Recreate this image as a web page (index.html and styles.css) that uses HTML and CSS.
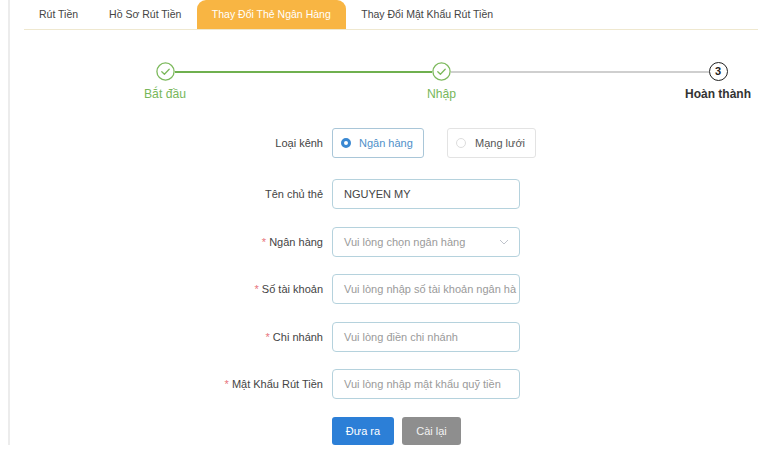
FILE: index.html
```html
<!DOCTYPE html>
<html lang="vi">
<head>
<meta charset="utf-8">
<title>Thay Đổi Thẻ Ngân Hàng</title>
<link rel="stylesheet" href="styles.css">
</head>
<body>
<div class="wrap">
  <nav class="tabs">
    <div class="tab">Rút Tiền</div>
    <div class="tab">Hồ Sơ Rút Tiền</div>
    <div class="tab active">Thay Đổi Thẻ Ngân Hàng</div>
    <div class="tab">Thay Đổi Mật Khẩu Rút Tiền</div>
  </nav>

  <div class="steps">
    <div class="step done">
      <span class="circle"><svg width="19" height="19" viewBox="0 0 19 19"><circle cx="9.5" cy="9.5" r="8.6" fill="none" stroke="#7cb95c" stroke-width="1.3"/><path d="M5.8 9.8 L8.4 12.2 L13.2 7.2" fill="none" stroke="#7cb95c" stroke-width="1.3" stroke-linecap="round" stroke-linejoin="round"/></svg></span>
      <span class="label">Bắt đầu</span>
    </div>
    <div class="line green"></div>
    <div class="step done">
      <span class="circle"><svg width="19" height="19" viewBox="0 0 19 19"><circle cx="9.5" cy="9.5" r="8.6" fill="none" stroke="#7cb95c" stroke-width="1.3"/><path d="M5.8 9.8 L8.4 12.2 L13.2 7.2" fill="none" stroke="#7cb95c" stroke-width="1.3" stroke-linecap="round" stroke-linejoin="round"/></svg></span>
      <span class="label">Nhập</span>
    </div>
    <div class="line gray"></div>
    <div class="step current">
      <span class="circle num">3</span>
      <span class="label">Hoàn thành</span>
    </div>
  </div>

  <form class="form">
    <div class="row first">
      <label class="lbl">Loại kênh</label>
      <div class="radios">
        <span class="radio checked"><span class="dot"></span>Ngân hàng</span>
        <span class="radio"><span class="dot"></span>Mạng lưới</span>
      </div>
    </div>
    <div class="row">
      <label class="lbl">Tên chủ thẻ</label>
      <div class="input value">NGUYEN MY</div>
    </div>
    <div class="row">
      <label class="lbl"><span class="req">*</span> Ngân hàng</label>
      <div class="input select"><span>Vui lòng chọn ngân hàng</span>
        <svg class="chev" width="10" height="6" viewBox="0 0 10 6"><path d="M1 1 L5 5 L9 1" fill="none" stroke="#c0c4cc" stroke-width="1"/></svg>
      </div>
    </div>
    <div class="row">
      <label class="lbl"><span class="req">*</span> Số tài khoản</label>
      <div class="input">Vui lòng nhập số tài khoản ngân hà</div>
    </div>
    <div class="row">
      <label class="lbl"><span class="req">*</span> Chi nhánh</label>
      <div class="input">Vui lòng điền chi nhánh</div>
    </div>
    <div class="row">
      <label class="lbl"><span class="req">*</span> Mật Khẩu Rút Tiền</label>
      <div class="input">Vui lòng nhập mật khẩu quỹ tiền</div>
    </div>
    <div class="row buttons">
      <span class="lbl"></span>
      <button type="button" class="btn primary">Đưa ra</button>
      <button type="button" class="btn reset">Cài lại</button>
    </div>
  </form>
</div>
</body>
</html>
```

FILE: styles.css
```css
* { box-sizing: border-box; }
html, body { margin: 0; padding: 0; background: #fff; }
body {
  font-family: "Liberation Sans", Arial, sans-serif;
  font-size: 11px;
  color: #333;
  width: 758px;
  height: 450px;
  overflow: hidden;
}
.wrap {
  margin-left: 8px;
  height: 445px;
  border-left: 2px solid #ececec;
  padding-left: 14px;
}
.tabs {
  display: flex;
  height: 30px;
  border-bottom: 1px solid #efe8cf;
  font-size: 10.5px;
}
.tab {
  padding: 0 15.5px;
  height: 29px;
  line-height: 29px;
  color: #444;
  white-space: nowrap;
}
.tab:first-child { padding-left: 15px; }
.tab.active {
  background: #f8b543;
  color: #fff;
  border-radius: 9px 9px 0 0;
  padding: 0 15px;
}
.steps {
  display: flex;
  margin-top: 32px;
  margin-left: 101px;
  height: 66px;
}
.step {
  width: 80px;
  display: flex;
  flex-direction: column;
  align-items: center;
  position: relative;
  z-index: 1;
}
.circle {
  width: 19px;
  height: 19px;
  display: block;
}
.circle svg { display: block; }
.circle.num {
  border: 1.6px solid #222;
  border-radius: 50%;
  font-weight: bold;
  font-size: 11px;
  line-height: 16px;
  text-align: center;
  color: #222;
}
.label {
  margin-top: 6px;
  font-size: 12.2px;
  white-space: nowrap;
}
.done .label { color: #78b75a; }
.current .label { color: #333; font-weight: bold; font-size: 12px; }
.line {
  flex: 1;
  height: 2px;
  margin: 9px -30.5px 0;
}
.line.green { background: #6fb04f; }
.line.gray { background: #cfcfcf; }

.form { display: block; }
.row {
  display: flex;
  align-items: center;
  height: 30px;
  margin-bottom: 17.6px;
}
.row.first { margin-bottom: 21px; }
.lbl {
  width: 299px;
  margin-right: 9px;
  text-align: right;
  color: #444;
  white-space: nowrap;
}
.req { color: #e8747c; }
.radios { display: flex; gap: 23px; }
.radio {
  display: flex;
  align-items: center;
  height: 30px;
  border: 1px solid #e3e3e3;
  border-radius: 3px;
  padding: 0 0 0 8px;
  color: #555;
  width: 89px;
  white-space: nowrap;
}
.radio .dot {
  flex: none;
  width: 10px;
  height: 10px;
  border-radius: 50%;
  border: 1px solid #ddd;
  margin-right: 9px;
  background: #fff;
}
.radio.checked {
  border-color: #a9c6d8;
  color: #4f90c9;
  width: 92px;
}
.radio.checked .dot {
  border: 3px solid #3a88d2;
  background: #fff;
  margin-right: 8px;
}
.input {
  width: 188px;
  height: 30px;
  border: 1px solid #b5d2dd;
  border-radius: 4px;
  padding: 0 0 0 11px;
  line-height: 28px;
  color: #9a9a9a;
  white-space: nowrap;
  overflow: hidden;
}
.input.value { color: #444; }
.input.select {
  display: flex;
  align-items: center;
  justify-content: space-between;
  padding-right: 10px;
}
.chev { display: block; }
.buttons { height: 28px; margin: 0; }
.btn {
  height: 28px;
  border: none;
  border-radius: 3px;
  font-family: "Liberation Sans", Arial, sans-serif;
  font-size: 11px;
  color: #fff;
  padding: 0;
  cursor: pointer;
}
.btn.primary { background: #2c7fd7; width: 62px; margin-right: 8px; }
.btn.reset { background: #8e8e8e; width: 59px; color: #f2f2f2; }
```
